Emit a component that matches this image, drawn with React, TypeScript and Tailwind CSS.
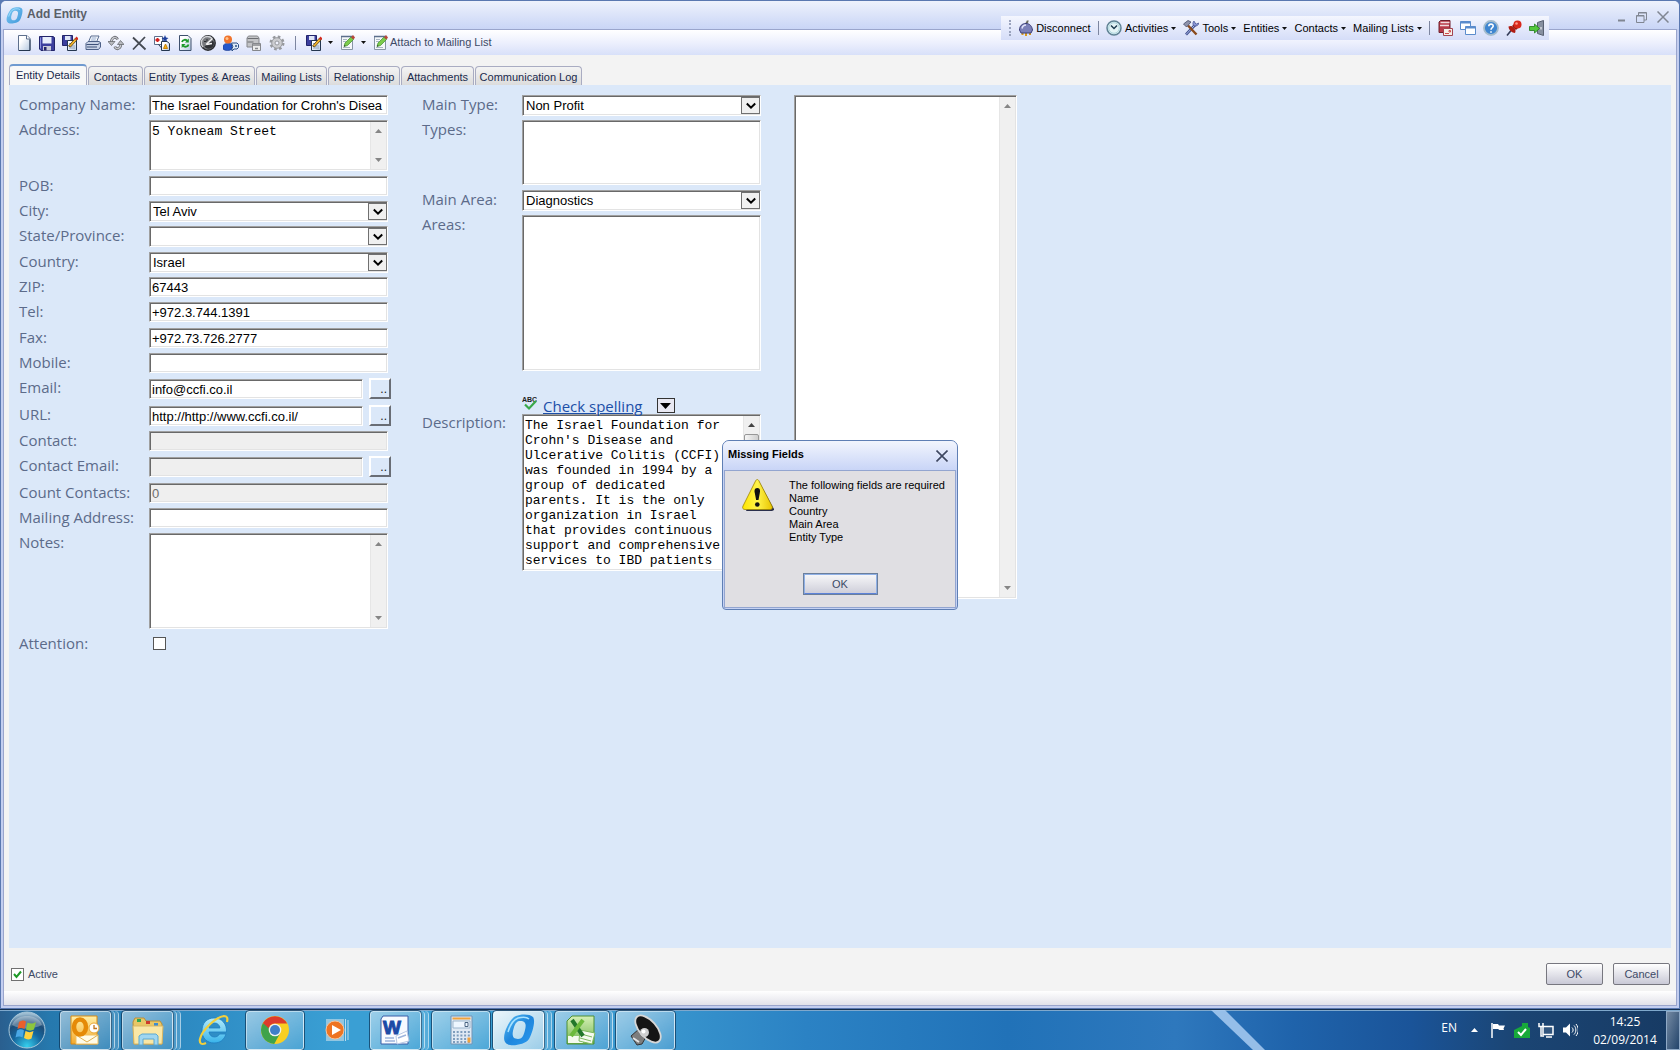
import type { ReactNode } from "react";
import { clsx } from "clsx";

const bevel =
  "border border-t-[#a0a0a0] border-l-[#a0a0a0] border-b-white border-r-white shadow-[inset_1px_1px_#696969,inset_-1px_-1px_#e3e3e3]";

/* ---------- icons ---------- */

function Svg({ children, className = "size-4", box = "0 0 16 16" }: { children: ReactNode; className?: string; box?: string }) {
  return (
    <svg viewBox={box} className={clsx("shrink-0", className)} fill="none" aria-hidden="true">
      {children}
    </svg>
  );
}

const Gradients = () => (
  <svg className="absolute size-0" aria-hidden="true">
    <defs>
      <linearGradient id="page" x1="0" y1="0" x2="1" y2="1">
        <stop offset="0.3" stopColor="#fff" />
        <stop offset="1" stopColor="#b4c8e0" />
      </linearGradient>
      <linearGradient id="logo" x1="0" y1="0" x2="1" y2="1">
        <stop offset="0" stopColor="#5cc0f4" />
        <stop offset="0.5" stopColor="#1f86dc" />
        <stop offset="1" stopColor="#2a9af0" />
      </linearGradient>
      <linearGradient id="logoSoft" x1="0" y1="0" x2="1" y2="1">
        <stop offset="0" stopColor="#7cc8f2" />
        <stop offset="1" stopColor="#3f97da" />
      </linearGradient>
      <linearGradient id="warn" x1="0" y1="0" x2="1" y2="0">
        <stop offset="0" stopColor="#ffe600" />
        <stop offset="0.5" stopColor="#fff34a" />
        <stop offset="1" stopColor="#e8c400" />
      </linearGradient>
      <radialGradient id="orb" cx="0.5" cy="0.95" r="0.9">
        <stop offset="0" stopColor="#35d0ee" />
        <stop offset="0.45" stopColor="#1668a0" />
        <stop offset="0.75" stopColor="#1d4c77" />
        <stop offset="1" stopColor="#9dbdd2" />
      </radialGradient>
      <linearGradient id="outlook" x1="0" y1="0" x2="0" y2="1">
        <stop offset="0" stopColor="#fff0a8" />
        <stop offset="1" stopColor="#f5a92c" />
      </linearGradient>
      <linearGradient id="ie" x1="0" y1="0" x2="0" y2="1">
        <stop offset="0" stopColor="#b5ecfb" />
        <stop offset="1" stopColor="#37b3ea" />
      </linearGradient>
      <linearGradient id="excel" x1="0" y1="0" x2="0" y2="1">
        <stop offset="0" stopColor="#d6f0b6" />
        <stop offset="1" stopColor="#6fb54e" />
      </linearGradient>
    </defs>
  </svg>
);

const PageIcon = () => (
  <Svg>
    <path d="M2.5 .5H11l3 3v12H2.5z" fill="url(#page)" stroke="#5d6f8c" />
    <path d="M14 4.5V15.5H3" stroke="#24364f" />
    <path d="M10.5 .5v3.500h3.500" stroke="#5d6f8c" fill="#fff" />
  </Svg>
);

const SaveIcon = () => (
  <Svg>
    <path d="M.5 1.500H14l1.500 1v13H2L.5 14z" fill="#3c3f9e" stroke="#22246a" />
    <path d="M3.500 2h9v6.500h-9z" fill="#e8eefc" />
    <path d="M1.500 2.500v11" stroke="#8a90e0" />
    <path d="M4 11h8v4.500H4z" fill="#c9cbd8" />
    <path d="M5 12h2.500v3.500H5z" fill="#25266a" />
  </Svg>
);

const SaveEditIcon = () => (
  <Svg>
    <path d="M.5 .5h10v10H.5z" fill="#3c3f9e" stroke="#22246a" />
    <path d="M3 1h5.500v4H3z" fill="#dfe6f8" />
    <path d="M5.500 5.500h9v10h-9z" fill="url(#page)" stroke="#24364f" />
    <path d="M7 8.500h4M7 11h6M7 13h6" stroke="#8fa3bd" />
    <path d="M6.500 11 13 3.500l2 1.500-6.500 7z" fill="#f2b42b" stroke="#3b2a06" strokeWidth=".7" />
    <path d="m12.500 4 2-2.500L16 3v2z" fill="#d52b1e" />
  </Svg>
);

const PrintIcon = () => (
  <Svg>
    <path d="M6 1h8l-2.500 6h-8z" fill="#fff" stroke="#566b8f" />
    <path d="M6.500 3h5M5.800 5h5" stroke="#8ba4cc" />
    <path d="M1 8.500 3 6.500h11l1.500 1v4.500l-2 2.500H1z" fill="#c8d2e6" stroke="#4d6087" />
    <path d="M1.500 9.500h12M2 12h10" stroke="#3d5078" />
    <path d="M13 9.500 15 7.500" stroke="#4d6087" />
  </Svg>
);

const LoopIcon = () => (
  <Svg>
    <path d="M3.500 7.500C3 3 8 0 9.500 4.500" stroke="#6a6c71" strokeWidth="2.800" />
    <path d="M3.500 7.500C3 3 8 0 9.500 4.500" stroke="#c9cbd0" strokeWidth="1.200" />
    <path d="M0 6.500h7l-3.500 4z" fill="#b9bbc0" stroke="#6a6c71" strokeWidth=".8" />
    <path d="M12.800 8.500c.5 4.500-4.500 7.500-6 3" stroke="#6a6c71" strokeWidth="2.800" />
    <path d="M12.800 8.500c.5 4.500-4.500 7.500-6 3" stroke="#c9cbd0" strokeWidth="1.200" />
    <path d="M9.500 9.500h6.500l-3.500-4z" fill="#b9bbc0" stroke="#6a6c71" strokeWidth=".8" />
  </Svg>
);

const DeleteIcon = () => (
  <Svg>
    <path d="M2 2.500 14.500 14.500M14 2 2 14.500" stroke="#454a52" strokeWidth="1.800" />
  </Svg>
);

const ShapesIcon = () => (
  <Svg>
    <path d="M.5 1.500h8v8h-8z" fill="#fff" stroke="#5d6f8c" />
    <path d="M3.500 3v4M1.500 5h4" stroke="#d32121" strokeWidth="2" />
    <path d="m11 0 1 2.500 2.500.5-2 1.500.5 2.500-2-1.500L9 7l.5-2.500-2-1.500L10 2.500z" fill="#1d3f9c" />
    <path d="M4.500 9.500 8.500 14" stroke="#24364f" />
    <path d="M7.500 6.500H13l2.500 2v7h-8z" fill="url(#page)" stroke="#24364f" />
    <path d="m11.500 9 2 4.500h-4z" fill="#f7b314" stroke="#c7820a" />
  </Svg>
);

const RefreshIcon = () => (
  <Svg>
    <path d="M2.500 .5H11l3 3v12H2.500z" fill="url(#page)" stroke="#3e506d" />
    <path d="M5 7c.5-2.500 4-3 5.500-1" stroke="#1c9a2a" strokeWidth="1.800" />
    <path d="M11.800 3.500v4H8z" fill="#1c9a2a" />
    <path d="M11.500 9.500c-.5 2.500-4 3-5.500 1" stroke="#1c9a2a" strokeWidth="1.800" />
    <path d="M4.700 13V9h3.800z" fill="#1c9a2a" />
  </Svg>
);

const GaugeIcon = () => (
  <Svg>
    <circle cx="8" cy="8" r="7.200" fill="#77797d" stroke="#2a2c30" strokeWidth="1.500" />
    <path d="M3 12A6 6 0 0 1 12 3.500" stroke="#d0d2d5" strokeWidth="1.500" />
    <path d="M4.500 11.500a5 5 0 0 0 8.500-6z" fill="#303236" />
    <path d="M6 9.500 12.500 3.500M6.500 9.500 12 8.500" stroke="#f2f2f2" strokeWidth="1.400" />
    <path d="M4 6.500h2.500M7 4v2" stroke="#2a2c30" />
  </Svg>
);

const UserKeyIcon = () => (
  <Svg>
    <path d="M0 10.500C1.500 8 8 7 9 10v4c-2 2-7 2-9 0z" fill="#2456c9" stroke="#143488" strokeWidth=".6" />
    <circle cx="5" cy="4.500" r="4" fill="#f0732a" />
    <circle cx="4" cy="3.500" r="1.500" fill="#ffc08a" />
    <path d="M8.500 8h5.500l1.500 1.500v3L14 14H11l-2 2v-3l1-1z" fill="#dceaf8" stroke="#2b4f86" />
    <circle cx="13" cy="11" r="1" fill="#2b4f86" />
  </Svg>
);

const ServerIcon = () => (
  <Svg>
    <path d="M2.500 1h9l1.500 2v9H1V3z" fill="#c3c4c7" stroke="#85878b" />
    <path d="M1.500 3.500h11M1.500 7h6" stroke="#6c6e72" />
    <path d="M6.500 8.500h8v7h-8z" fill="#ececec" stroke="#85878b" />
    <path d="M7 10h8M9 13.500h3" stroke="#85878b" strokeWidth="1.500" />
  </Svg>
);

const GearIcon = () => (
  <Svg>
    <circle cx="8" cy="8" r="6.300" stroke="#97999d" strokeWidth="2.400" strokeDasharray="2.600 2.350" />
    <circle cx="8" cy="8" r="5.300" fill="#cccdd0" stroke="#97999d" />
    <circle cx="8" cy="8" r="2" fill="#f1f3fd" stroke="#97999d" />
  </Svg>
);

const NoteEditIcon = () => (
  <Svg>
    <path d="M2.500 1.500h11v13h-11z" fill="#f5f8fa" stroke="#8795a5" />
    <path d="M2 1.500h12" stroke="#5d6f8c" strokeWidth="1.500" />
    <path d="M4 12.500h7M4 4.500h4M4 6.500h3" stroke="#a9b6c4" />
    <path d="m5 11.500 1-3.500 6-6 2.500 2.500-6 6z" fill="#7ccb4c" stroke="#3d8d2e" strokeWidth=".7" />
    <path d="m12 2.500 2-2.500L16 2.500l-1.500 2z" fill="#b8493a" />
    <path d="m5 11.500.5-1.500 1 1z" fill="#222" />
  </Svg>
);

const LogoIcon = ({ className, soft }: { className?: string; soft?: boolean }) => (
  <Svg className={className} box="0 0 32 32">
    <path
      fillRule="evenodd"
      d="M13 2C17 0 27-.5 30 3c3 4-1 17-4 22-3 5-14 7-19 6-6-1-7-6-5-13C4 12 8 4 13 2zm3 5c-4 1-5 6-6 10-1 5 0 8 5 8 5 0 6-5 7-9s2-10-6-9z"
      fill={soft ? "url(#logoSoft)" : "url(#logo)"}
    />
    <path d="M5 18C7 11 10 6 15 4c4-1 9-1 11 1" stroke="#a9e2ff" strokeWidth="1.500" />
  </Svg>
);

const PlugIcon = () => (
  <Svg>
    <path d="M8 5c0-3 2-2 1.500-4.500" stroke="#6a6a5c" strokeWidth="2" />
    <path d="M4.500 12v3M12 12v3M8 13v3" stroke="#d99a1a" strokeWidth="2" />
    <path d="M1.500 10c0-4 2.500-6.500 6.500-6.500s6 3 6.500 6.500l-1.500 3H3z" fill="#7b80b8" stroke="#3b3e78" />
    <path d="M4 8.500c.5-2.500 2-3.500 4-3.500" stroke="#dfe1f8" strokeWidth="1.500" />
  </Svg>
);

const ClockIcon = () => (
  <Svg>
    <circle cx="8" cy="8" r="7" fill="#e4f4f6" stroke="#5f8294" strokeWidth="1.500" />
    <circle cx="8" cy="8" r="5.300" stroke="#a9d4dc" />
    <path d="M5 5.500 8 8.500l3-3" stroke="#1e3c50" strokeWidth="1.500" />
  </Svg>
);

const ToolsIcon = () => (
  <Svg>
    <path d="M3 14.500 13 4" stroke="#3d4c8c" strokeWidth="2.600" />
    <path d="M3 14.500 12 5" stroke="#b4c2ee" strokeWidth="1" />
    <path d="M11 1c-2 2-1 5 1 5s4-1 3.500-3L13.500 4 12 3z" fill="#8a98d8" stroke="#3d4c8c" strokeWidth=".7" />
    <path d="M13.500 14.500 5 5.500" stroke="#8a4a1c" strokeWidth="2.400" />
    <path d="M.5 4 5 .5l3 1.500-4.500 5z" fill="#8e93ac" stroke="#454a68" strokeWidth=".8" />
  </Svg>
);

const BookMailIcon = () => (
  <Svg>
    <path d="M2 2 3.500.5H13v12H2z" fill="#b83a48" stroke="#70202c" />
    <path d="M3.500 2.500h9M3 5.500h9" stroke="#efd9dc" strokeWidth="1.400" />
    <path d="M6.500 8.500h9v7h-9z" fill="#f6efe8" stroke="#a34450" />
    <path d="M8 13.500h4M12 10.500h1.500v1.500H12z" stroke="#d04a4a" />
  </Svg>
);

const WindowsIcon = () => (
  <Svg>
    <path d="M.5 1.500h10v8H.5z" fill="#fff" stroke="#5b8ccc" />
    <path d="M.5 2.500h10" stroke="#5b8ccc" strokeWidth="2" />
    <path d="M5.500 6.500h10v8h-10z" fill="#fff" stroke="#5b8ccc" />
    <path d="M5.500 7.500h10" stroke="#5b8ccc" strokeWidth="2" />
  </Svg>
);

const HelpIcon = () => (
  <Svg>
    <circle cx="8" cy="8" r="7" fill="#3f86d0" stroke="#a4bccd" strokeWidth="1.800" />
    <path d="M5.800 6.300c0-3 4.600-2.800 4.400-.2C10 7.800 8 7.800 8 9.800M8 11.200v1.500" stroke="#fff" strokeWidth="1.600" />
  </Svg>
);

const PinIcon = () => (
  <Svg>
    <path d="M1 15.500 5.500 10" stroke="#333b58" strokeWidth="1.600" />
    <path d="M2.500 6.500c2-1 4-.5 5.500 1s2 3.500 1 5.500C6 13 2.500 10 2.500 6.500z" fill="#b01c12" />
    <path d="m6 6 3-3 4 4-3 3z" fill="#8d140c" />
    <circle cx="11.500" cy="4.500" r="4" fill="#d8281b" />
    <circle cx="10.500" cy="3.500" r="1.300" fill="#ff9a8c" />
  </Svg>
);

const ExitIcon = () => (
  <Svg>
    <path d="M8.500 2.500 14.500 .5v15l-6-2z" fill="#8790a0" stroke="#596172" />
    <path d="M12 7v2.500" stroke="#fff" />
    <path d="M10.500 8.500 5.500 4v2.500H.5v4h5V13z" fill="#52c83c" stroke="#1f7a18" strokeWidth=".8" />
  </Svg>
);

const Caret = () => (
  <Svg className="h-[3px] w-[5px]" box="0 0 5 3">
    <path d="M0 0h5L2.500 3z" fill="#111" />
  </Svg>
);

/* ---------- form controls ---------- */

function Label({ id, children, className = "w-[130px]" }: { id: string; children: ReactNode; className?: string }) {
  return (
    <label
      htmlFor={id}
      className={clsx("shrink-0 whitespace-nowrap font-['Open_Sans',sans-serif] text-[15px] leading-[18px] text-[#5c6b8a]", className)}
    >
      {children}
    </label>
  );
}

function TextBox({ id, value, disabled, className = "w-[239px]" }: { id: string; value?: string; disabled?: boolean; className?: string }) {
  return (
    <input
      id={id}
      type="text"
      defaultValue={value}
      disabled={disabled}
      className={clsx("h-5 px-0.5 text-[13px] text-black disabled:bg-[#efefef] disabled:text-[#6d6d6d] enabled:bg-white", bevel, className)}
    />
  );
}

function DropDown({ id, value = "" }: { id: string; value?: string }) {
  return (
    <div className={clsx("flex h-[21px] w-[239px] items-center bg-white py-px pl-px", bevel)}>
      <select id={id} defaultValue={value} className="h-full min-w-0 flex-1 appearance-none px-0.5 text-[13px] leading-4 text-black outline-none">
        <option>{value}</option>
      </select>
      <span className="pointer-events-none flex h-[17px] w-[19px] items-center justify-center border border-[#707070] bg-[#f0f0f0]">
        <Svg className="h-2 w-2.5" box="0 0 10 8">
          <path d="m.8 1.500 4.200 4.200 4.200-4.200" stroke="#000" strokeWidth="2" />
        </Svg>
      </span>
    </div>
  );
}

function ScrollStrip({ thumb }: { thumb?: boolean }) {
  return (
    <div className="flex w-4 shrink-0 flex-col items-center justify-between border-l border-[#e6e6e6] bg-[#f0f0f0] py-[7px]">
      <Svg className="h-1 w-[7px]" box="0 0 7 4"><path d="M3.500 0 7 4H0z" fill={thumb ? "#444" : "#868686"} /></Svg>
      {thumb && <div className="mt-[7px] h-10 w-[15px] rounded-xs border border-[#979797] bg-linear-to-r from-[#f5f5f5] to-[#cfcfcf]" />}
      <div className="flex-1" />
      <Svg className="h-1 w-[7px]" box="0 0 7 4"><path d="M0 0h7L3.500 4z" fill={thumb ? "#444" : "#868686"} /></Svg>
    </div>
  );
}

function TextArea({ id, value, className, thumb }: { id: string; value?: string; className?: string; thumb?: boolean }) {
  return (
    <div className={clsx("flex w-[239px] bg-white p-px", bevel, className)}>
      <textarea
        id={id}
        defaultValue={value}
        className="min-w-0 flex-1 resize-none overflow-hidden px-px pt-0.5 font-['Liberation_Mono',monospace] text-[13px] leading-[15px] text-black outline-none"
      />
      <ScrollStrip thumb={thumb} />
    </div>
  );
}

const MoreButton = ({ label }: { label: string }) => (
  <button
    aria-label={label}
    className="flex h-[21px] w-[22px] items-end justify-end border-2 border-t-white border-l-white border-r-[#696d75] border-b-[#696d75] pr-0.5 pb-1 text-[12px] leading-[8px] text-[#222]"
  >
    ..
  </button>
);

type Field = { label: string; id: string; h: string; kind?: "text" | "select" | "more"; value?: string; disabled?: boolean };

const fields: Field[] = [
  { label: "POB:", id: "pob", h: "h-[25px]" },
  { label: "City:", id: "city", h: "h-[25px]", kind: "select", value: "Tel Aviv" },
  { label: "State/Province:", id: "state", h: "h-[26px]", kind: "select" },
  { label: "Country:", id: "country", h: "h-[25px]", kind: "select", value: "Israel" },
  { label: "ZIP:", id: "zip", h: "h-[25px]", value: "67443" },
  { label: "Tel:", id: "tel", h: "h-[26px]", value: "+972.3.744.1391" },
  { label: "Fax:", id: "fax", h: "h-[25px]", value: "+972.73.726.2777" },
  { label: "Mobile:", id: "mobile", h: "h-[25px]" },
  { label: "Email:", id: "email", h: "h-[27px]", kind: "more", value: "info@ccfi.co.il" },
  { label: "URL:", id: "url", h: "h-[26px]", kind: "more", value: "http://http://www.ccfi.co.il/" },
  { label: "Contact:", id: "contact", h: "h-[25px]", disabled: true },
  { label: "Contact Email:", id: "contact-email", h: "h-[27px]", kind: "more", disabled: true },
  { label: "Count Contacts:", id: "count", h: "h-[25px]", value: "0", disabled: true },
  { label: "Mailing Address:", id: "mailing", h: "h-[25px]" },
];

function FieldRow({ f }: { f: Field }) {
  return (
    <div className={clsx("flex items-start", f.h)}>
      <Label id={f.id}>{f.label}</Label>
      {f.kind === "select" && <DropDown id={f.id} value={f.value} />}
      {!f.kind && <TextBox id={f.id} value={f.value} disabled={f.disabled} />}
      {f.kind === "more" && (
        <div className="flex items-start gap-1.5">
          <TextBox id={f.id} value={f.value} disabled={f.disabled} className="mt-px w-[214px]" />
          <MoreButton label={`Open ${f.label}`} />
        </div>
      )}
    </div>
  );
}

const description =
  "The Israel Foundation for\nCrohn's Disease and\nUlcerative Colitis (CCFI)\nwas founded in 1994 by a\ngroup of dedicated\nparents. It is the only\norganization in Israel\nthat provides continuous\nsupport and comprehensive\nservices to IBD patients";

function EntityForm() {
  return (
    <div className="flex items-start gap-8">
      <div className="w-[371px] shrink-0">
        <div className="flex h-[25px] items-start">
          <Label id="company">Company Name:</Label>
          <TextBox id="company" value="The Israel Foundation for Crohn's Disea" />
        </div>
        <div className="flex h-14 items-start">
          <Label id="address">Address:</Label>
          <TextArea id="address" value="5 Yokneam Street" className="h-[51px]" />
        </div>
        {fields.map((f) => (
          <FieldRow key={f.id} f={f} />
        ))}
        <div className="flex h-[101px] items-start">
          <Label id="notes">Notes:</Label>
          <TextArea id="notes" className="h-24" />
        </div>
        <div className="flex items-start">
          <Label id="attention">Attention:</Label>
          <input id="attention" type="checkbox" className="mt-[3px] ml-1 size-[13px] appearance-none border border-[#555] bg-white" />
        </div>
      </div>

      <div className="w-[340px] shrink-0">
        <div className="flex h-[25px] items-start">
          <Label id="main-type" className="w-[100px]">Main Type:</Label>
          <DropDown id="main-type" value="Non Profit" />
        </div>
        <div className="flex h-[70px] items-start">
          <Label id="types" className="w-[100px]">Types:</Label>
          <select id="types" multiple className={clsx("h-[65px] w-[239px] bg-white", bevel)} />
        </div>
        <div className="flex h-[25px] items-start">
          <Label id="main-area" className="w-[100px]">Main Area:</Label>
          <DropDown id="main-area" value="Diagnostics" />
        </div>
        <div className="flex h-[182px] items-start">
          <Label id="areas" className="w-[100px]">Areas:</Label>
          <select id="areas" multiple className={clsx("h-[156px] w-[239px] bg-white", bevel)} />
        </div>
        <div className="flex items-start">
          <div className="pt-4">
            <Label id="description" className="block w-[100px]">Description:</Label>
          </div>
          <div className="w-[239px] shrink-0">
            <div className="flex h-[17px] items-center gap-1.5">
              <Svg className="h-[17px] w-[15px]" box="0 0 15 17">
                <text x="0" y="5" fontSize="7" fontFamily="Liberation Sans" fontWeight="bold" fill="#222">ABC</text>
                <path d="m3 7.500 4 4 7-7.500" stroke="#3aa84a" strokeWidth="2.200" />
              </Svg>
              <a href="#spelling" className="font-['Open_Sans',sans-serif] text-[15px] leading-4 text-[#1c4fa8] underline">
                Check spelling
              </a>
              <button aria-label="Spelling options" className="ml-2 flex h-[15px] w-[18px] items-center justify-center border border-[#333] bg-[#e8e8f2]">
                <Svg className="h-1.5 w-[11px]" box="0 0 11 6"><path d="M0 0h11L5.500 6z" fill="#000" /></Svg>
              </button>
            </div>
            <TextArea id="description" value={description} className="h-[157px]" thumb />
          </div>
        </div>
      </div>

      <div className={clsx("flex h-[504px] w-[223px] shrink-0 bg-white p-px", bevel)}>
        <div className="flex-1" />
        <ScrollStrip />
      </div>
    </div>
  );
}

/* ---------- window chrome ---------- */

const toolButtons = [
  { name: "New", icon: <PageIcon /> },
  { name: "Save", icon: <SaveIcon /> },
  { name: "Save and edit", icon: <SaveEditIcon /> },
  { name: "Print", icon: <PrintIcon /> },
  { name: "Replay", icon: <LoopIcon /> },
  { name: "Delete", icon: <DeleteIcon /> },
  { name: "Workflow", icon: <ShapesIcon /> },
  { name: "Refresh", icon: <RefreshIcon /> },
  { name: "History", icon: <GaugeIcon /> },
  { name: "Permissions", icon: <UserKeyIcon /> },
  { name: "Archive", icon: <ServerIcon /> },
  { name: "Settings", icon: <GearIcon /> },
];

function Toolbar() {
  return (
    <div className="flex h-[25px] items-center bg-linear-to-b from-white via-[#edf0fd] to-[#d8e0f9] pl-3 text-[11px] text-[#3d4a66]">
      <div className="flex gap-[7px]">
        {toolButtons.map((b) => (
          <button key={b.name} aria-label={b.name}>{b.icon}</button>
        ))}
      </div>
      <div className="mx-2.5 h-3.5 w-px bg-[#7d86a0]" />
      <button aria-label="Save as" className="flex items-center gap-1.5"><SaveEditIcon /><Caret /></button>
      <button aria-label="Notes" className="ml-1.5 flex items-center gap-1.5"><NoteEditIcon /><Caret /></button>
      <button className="ml-1.5 flex items-center gap-0.5"><NoteEditIcon />Attach to Mailing List</button>
    </div>
  );
}

const menus = [
  { name: "Activities", icon: <ClockIcon /> },
  { name: "Tools", icon: <ToolsIcon /> },
  { name: "Entities" },
  { name: "Contacts" },
  { name: "Mailing Lists" },
];

function MenuBar() {
  return (
    <div className="absolute top-4 right-[131px] flex h-6 w-[548px] items-center justify-between bg-linear-to-b from-[#f4f6fe] to-[#d5ddf8] pr-1 pl-2 text-[11px] text-black">
      <div className="h-4 border-l-2 border-dotted border-[#9aa3bd]" />
      <button className="flex items-center gap-0.5"><PlugIcon />Disconnect</button>
      <div className="h-3.5 w-px bg-[#7d86a0]" />
      {menus.map((m) => (
        <button key={m.name} className="flex items-center gap-[3px]">
          {m.icon}
          {m.name}
          <Caret />
        </button>
      ))}
      <div className="h-3.5 w-px bg-[#7d86a0]" />
      <div className="flex gap-[7px]">
        <button aria-label="Address book"><BookMailIcon /></button>
        <button aria-label="Windows"><WindowsIcon /></button>
        <button aria-label="Help"><HelpIcon /></button>
        <button aria-label="Pin"><PinIcon /></button>
        <button aria-label="Exit"><ExitIcon /></button>
      </div>
    </div>
  );
}

const tabs = [
  { name: "Contacts", w: "w-[55px]" },
  { name: "Entity Types & Areas", w: "w-[111px]" },
  { name: "Mailing Lists", w: "w-[71px]" },
  { name: "Relationship", w: "w-[72px]" },
  { name: "Attachments", w: "w-[73px]" },
  { name: "Communication Log", w: "w-[107px]" },
];

function Tabs() {
  return (
    <div className="flex h-[30px] items-end gap-px text-[11px] text-[#1a2a4c]" role="tablist">
      <button role="tab" aria-selected="true" className="h-[21px] w-[78px] rounded-t-sm border border-t-2 border-b-0 border-[#a9acc2] border-t-[#6f9ad0] bg-[#f8f8f8] pb-0.5 leading-4">
        Entity Details
      </button>
      {tabs.map((t) => (
        <button key={t.name} role="tab" aria-selected="false" className={clsx("h-[19px] rounded-t-sm border border-b-0 border-[#a9acc2] bg-linear-to-b from-[#f4f4f4] to-[#dcdcdc] pt-px leading-4 whitespace-nowrap", t.w)}>
          {t.name}
        </button>
      ))}
    </div>
  );
}

function Dialog() {
  return (
    <div className="pointer-events-none fixed inset-0 grid place-items-center">
      <div role="dialog" aria-label="Missing Fields" className="pointer-events-auto flex h-[170px] w-[236px] flex-col overflow-hidden rounded-t-[7px] rounded-b-sm border border-[#5f7fb4] bg-[#c5d2f4]">
        <div className="flex h-[29px] shrink-0 items-center justify-between bg-linear-to-b from-[#f2f5fd] to-[#c9d5f7] pr-[9px] pl-[5px]">
          <span className="pb-0.5 text-[11px] font-bold text-black">Missing Fields</span>
          <button aria-label="Close">
            <Svg className="size-3" box="0 0 12 12"><path d="m.5 .5 11 11M11.500.5l-11 11" stroke="#3e4760" strokeWidth="1.600" /></Svg>
          </button>
        </div>
        <div className="mx-px mb-px flex flex-1 flex-col border border-[#93a5d0] bg-[#e0dfe3] px-[17px] pt-2">
          <div className="flex gap-[15px]">
            <Svg className="size-8" box="0 0 32 32">
              <path d="M17 2.500 32 30c.500 1-1 2-2 2H4z" fill="#2a2f4c" />
              <path d="M13.500 2c1-2 2.500-2 3.500 0l13 25c1 2 0 3.500-2 3.500H3c-2 0-3-1.500-2-3.500z" fill="url(#warn)" stroke="#a08600" strokeWidth=".8" />
              <path d="M15.300 9c3 0 3 3 2.500 5l-1.300 7h-2.400L12.800 14c-.5-2-.5-5 2.500-5z" fill="#111" />
              <circle cx="15.300" cy="25.500" r="2.300" fill="#111" />
            </Svg>
            <p className="text-[11px] leading-[13px] whitespace-nowrap text-black">
              The following fields are required
              <br />Name
              <br />Country
              <br />Main Area
              <br />Entity Type
            </p>
          </div>
          <button className="mt-auto mb-3 h-[22px] w-[75px] self-center border-2 border-[#8fb0e6] border-b-[#5c82d8] bg-linear-to-b from-[#f6f6f8] to-[#cfcfda] text-[11px] leading-4 text-[#3d4a66] outline outline-1 -outline-offset-1 outline-[#6b7f9c]">
            OK
          </button>
        </div>
      </div>
    </div>
  );
}

const FootButton = ({ children }: { children: ReactNode }) => (
  <button className="h-[22px] w-[57px] rounded-xs border border-[#77777f] bg-linear-to-b from-white to-[#c9c9d6] text-[11px] leading-4 text-[#3d4a66]">
    {children}
  </button>
);

/* ---------- taskbar ---------- */

function TaskButton({ name, children, edges = 0, active, w = "w-[51px]" }: { name: string; children: ReactNode; edges?: number; active?: boolean; w?: string }) {
  return (
    <div className="flex h-[39px]">
      <button
        aria-label={name}
        className={clsx(
          "flex items-center justify-center rounded-[3px] border border-white/60 outline outline-1 outline-[#0d3356]/70",
          active ? "bg-linear-to-br from-white/90 to-white/50" : "bg-linear-to-br from-white/50 to-white/10",
          w,
        )}
      >
        {children}
      </button>
      {edges > 0 && <div className="w-1 rounded-r-sm border-r border-white/60 bg-white/15" />}
      {edges > 1 && <div className="w-1 rounded-r-sm border-r border-white/50 bg-white/15" />}
    </div>
  );
}

function Taskbar() {
  return (
    <footer className="flex h-[41px] shrink-0 items-center border-t border-[#16304f] bg-linear-[90deg,#2a5f8f_0%,#2679ae_3%,#2e8cc4_12%,#3a9fd4_20%,#3a9fd4_28%,#3a98cf_38%,#2b82c4_48%,#2172b8_60%,#2e78bd_70%,#1f63ab_77%,#1a5499_84%,#1b4574_90%,#173a63_100%] text-white shadow-[inset_0_1px_#7fa8cc]">
      <button aria-label="Start" className="ml-2 w-[52px]">
        <Svg className="size-[38px]" box="0 0 38 38">
          <circle cx="19" cy="19" r="18" fill="url(#orb)" stroke="#a9c8da" />
          <path d="M4 14C8 2 30 2 34 14c-8 4-22 5-30 0z" fill="#fff" opacity=".3" />
          <path d="M11 11c3-2 5-2 7-.5L16.500 18c-2-1.500-4.500-1.500-7 0z" fill="#e9602c" />
          <path d="M19.500 11.500c3 1.500 5 1.500 8.500-.5l-2 7.500c-3 1.500-5 1.500-8 0z" fill="#8cc63e" />
          <path d="M9 19.500c3-2 5-1.500 7 0l-1.500 7c-2-1.500-4.500-1.500-7 0z" fill="#4aa8e6" />
          <path d="M17.500 20c3 1.500 5 1.500 8 0l-2 7.500c-3 1.500-5 1-7.500-.5z" fill="#ffd23f" />
        </Svg>
      </button>
      <div className="flex flex-1 items-center gap-[3px]">
        <TaskButton name="Outlook" edges={2}>
          <Svg className="mr-1 size-8" box="0 0 32 32">
            <path d="M3 2h26v28H3z" fill="url(#outlook)" stroke="#d88a12" />
            <path d="M8 21h22v9H8z" fill="#fffbe8" stroke="#f0c060" />
            <path d="m8 21 11 7 11-7" stroke="#e0b050" />
            <ellipse cx="12" cy="13" rx="6" ry="7.500" stroke="#e58a08" strokeWidth="4.500" />
            <circle cx="26" cy="14" r="5" fill="#fff" stroke="#e8a838" />
            <path d="M26 11v3.500h3" stroke="#c0741c" strokeWidth="1.300" />
          </Svg>
        </TaskButton>
        <TaskButton name="Explorer" edges={2}>
          <Svg className="size-8" box="0 0 32 32">
            <path d="M1 8 3 4h9l2 3h14l2 3v20H2z" fill="#e9c766" stroke="#b98f38" />
            <path d="M5 5h4v3H5z" fill="#2fa84f" />
            <path d="M14 7h4v3h-4z" fill="#cc3b2b" />
            <path d="M22 9h4v3h-4z" fill="#3b8bd0" />
            <path d="M1 12h30l-1 18H2z" fill="#f9e7a6" stroke="#d9b764" />
            <path d="M7 31V22l3-2h14l2 2v9h-4v-6H11v6z" fill="#9fd6f0" stroke="#5ba8d2" />
          </Svg>
        </TaskButton>
        <button aria-label="Internet Explorer" className="flex w-[59px] justify-center">
          <Svg className="size-8" box="0 0 32 32">
            <path fillRule="evenodd" d="M16 4c8 0 13 6 12.500 14H11c.5 3 2.500 5 5.500 5 2 0 4-1 5-3h6.500c-2 6-6 9-12 9C9 29 4 24 4 17 4 9 9 4 16 4zm-5 10h11c-.5-3-2.500-5-5.500-5s-5 2-5.500 5z" fill="url(#ie)" stroke="#1f7fc0" strokeWidth=".8" />
            <path d="M29 8c1-4 0-6-3-6C18 3 4 16 2 25c-1 5 2 6 6 4" stroke="#f1cf3d" strokeWidth="2.200" />
          </Svg>
        </button>
        <TaskButton name="Chrome" w="w-[58px]">
          <Svg className="size-7" box="0 0 28 28">
            <circle cx="14" cy="14" r="14" fill="#f9cf23" />
            <path d="M1.900 7a14 14 0 0 0 11.300 21L19 17.500 14 14z" fill="#3fa34b" />
            <path d="M1.900 7A14 14 0 0 1 26.100 7.500H14a6.500 6.500 0 0 0-6.200 4.700z" fill="#dc3b2c" />
            <circle cx="14" cy="14" r="6.300" fill="#f2f2f2" />
            <circle cx="14" cy="14" r="5" fill="#3f7fc8" />
          </Svg>
        </TaskButton>
        <button aria-label="Media Player" className="flex w-[60px] justify-center">
          <Svg className="size-6" box="0 0 24 24">
            <path d="M1 1h18v22H1z" fill="#a9cfe4" opacity=".8" />
            <path d="M20.500 1v22M23 2v20" stroke="#bcdcec" />
            <circle cx="10" cy="12" r="9" fill="#ee7422" stroke="#f8c49a" />
            <path d="m7 7 9 5-9 5z" fill="#fff" />
          </Svg>
        </button>
        <TaskButton name="Word" edges={2}>
          <Svg className="mr-1 size-8" box="0 0 32 32">
            <path d="M5 2h25v28H3V5z" fill="#f7faff" stroke="#3b5ea8" />
            <path d="m18 22 11-5 2 10-12 3z" fill="#fff" stroke="#b8c8e4" />
            <path d="M7 24h9M7 27h10M20 24l8-3" stroke="#9db4dc" strokeWidth="1.500" />
            <text x="5" y="20" fontSize="19" fontWeight="bold" fontFamily="Liberation Sans" fill="#1c4aa6" stroke="#1c4aa6">W</text>
          </Svg>
        </TaskButton>
        <TaskButton name="Calculator" w="w-[58px]">
          <Svg className="h-[30px] w-[23px]" box="0 0 23 30">
            <path d="M1 1h21v28H1z" fill="#dfe9f4" stroke="#7393b4" />
            <path d="M2.500 2.500h18v2h-18z" fill="#f0a23c" />
            <path d="M3 6h17v7H3z" fill="#eef6ff" stroke="#9db5cc" />
            <path d="M15 7.500h3v4h-3z" stroke="#4a6582" />
            <path d="M3 17h17M3 20.500h17M3 24h17M3 27h17" stroke="#7e9dbd" strokeWidth="2" strokeDasharray="2 1.700" />
            <path d="M17.500 22.500h3v5h-3z" fill="#f0a23c" />
          </Svg>
        </TaskButton>
        <TaskButton name="Entity Manager" edges={2} active>
          <LogoIcon className="size-8" />
        </TaskButton>
        <TaskButton name="Excel" edges={1} w="w-[54px]">
          <Svg className="mr-1 size-8" box="0 0 32 32">
            <path d="M8 2h22v28H3V7z" fill="url(#excel)" stroke="#4d8f34" />
            <path d="M4 22h15v7H4z" fill="#f4faee" />
            <path d="m16 16 15 3-3 11-13-3z" fill="#f4faee" stroke="#7db860" />
            <path d="m17 20 11 3M16 24l11 3" stroke="#7db860" />
            <path d="m8 6 11 16" stroke="#21772a" strokeWidth="4" />
            <path d="M19 6 7 22" stroke="#6cba3c" strokeWidth="4" />
          </Svg>
        </TaskButton>
        <TaskButton name="Sound" w="w-[59px]">
          <Svg className="size-8" box="0 0 32 32">
            <path d="m1 22 8-7 8 6-5 9-5 1z" fill="#7d7d7d" stroke="#333" />
            <path d="m3 24 6 4" stroke="#e4e4e4" strokeWidth="2" />
            <ellipse cx="18" cy="15" rx="8.500" ry="16.500" transform="rotate(-42 18 15)" fill="#151515" stroke="#d6d6d6" strokeWidth="1.800" />
            <circle cx="14.500" cy="18.500" r="4.500" fill="#cfcfcf" />
            <circle cx="13.500" cy="17.500" r="2" fill="#fff" />
          </Svg>
        </TaskButton>
        <Svg className="mr-[174px] ml-auto h-10 w-14" box="0 0 56 40">
          <path d="M0 0h14l40 40H42z" fill="#a9cdf2" opacity=".85" />
        </Svg>
      </div>
      <div className="flex items-center gap-2 font-['Open_Sans',sans-serif] text-[12px]">
        <span className="mr-1.5 pb-1">EN</span>
        <Svg className="mr-1 h-1 w-[7px]" box="0 0 7 4"><path d="M3.500 0 7 4H0z" fill="#fff" /></Svg>
        <Svg><path d="M2 1v15" stroke="#fff" strokeWidth="1.500" /><path d="M3 2h5l1 1.500h6l-1.500 3 .5 1.500H9.500L8 7H3z" fill="#fff" /></Svg>
        <Svg><path d="M0 8 8 4V1h6v4l2 1v10H0z" fill="#17a93a" /><path d="m4 10 3 3 5-6" stroke="#fff" strokeWidth="2" /></Svg>
        <Svg><path d="M5 4.500h10v8H5z" stroke="#fff" strokeWidth="1.500" fill="#31557e" /><path d="M1 1v3.500h4V1M3 5v9h3M8 15h6" stroke="#fff" strokeWidth="1.500" /></Svg>
        <Svg><path d="M1 5.500h3l4-4v13l-4-4H1z" fill="#fff" /><path d="M10 5.500c1.500 1.500 1.500 3.500 0 5M12 3.500c2.500 2.500 2.500 6.500 0 9M14 2c3 4 3 8 0 12" stroke="#fff" /></Svg>
        <div className="ml-1.5 w-[66px] pt-0.5 text-center leading-[18px] whitespace-nowrap">
          <div>14:25</div>
          <div>02/09/2014</div>
        </div>
        <button aria-label="Show desktop" className="h-[39px] w-3.5 border border-[#8fa9c6] bg-linear-to-br from-white/40 to-white/5" />
      </div>
    </footer>
  );
}

export default function App() {
  return (
    <div className="relative flex min-h-screen flex-col bg-[#5a7ab4] font-['Liberation_Sans',Arial,sans-serif]">
      <Gradients />
      <main className="flex flex-1 flex-col overflow-hidden rounded-t-[6px] border border-[#5a78b0] bg-[#c3cef0]">
        <header className="flex h-[28px] items-center justify-between bg-linear-to-b from-[#eef2fc] to-[#c9d5f6] pr-2.5 pl-[5px]">
          <div className="flex items-center gap-1 text-[12px] font-bold text-[#5a5f68]">
            <LogoIcon className="size-[17px]" soft />
            <span className="pb-0.5">Add Entity</span>
          </div>
          <div className="flex items-end gap-2.5 pt-1 text-[#808692]">
            <button aria-label="Minimize"><Svg className="h-2.5 w-[9px]" box="0 0 9 10"><path d="M1 7.500h7" stroke="currentColor" strokeWidth="2" /></Svg></button>
            <button aria-label="Restore"><Svg className="size-[11px]" box="0 0 11 11"><path d="M2.500 3V.5h8V8H8M.5 3.500h7.500v7H.5z" stroke="currentColor" /><path d="M2.500 1h8M.5 4h7.500" stroke="currentColor" /></Svg></button>
            <button aria-label="Close window"><Svg className="size-3" box="0 0 12 12"><path d="m.5 .5 11 11M11.500.5l-11 11" stroke="currentColor" strokeWidth="1.500" /></Svg></button>
          </div>
        </header>
        <div className="mx-0.5 mb-0.5 flex flex-1 flex-col border border-[#9aa5cc] bg-[#f3f3f3]">
          <Toolbar />
          <div className="flex flex-1 flex-col px-[5px]">
            <Tabs />
            <section className="flex-1 bg-[#dbe8f9] px-2.5 py-2.5">
              <EntityForm />
            </section>
            <div className="flex h-[43px] shrink-0 items-center justify-between pt-2 pr-px">
              <div className="ml-0.5 flex items-center gap-1 pt-0.5 text-[11px] text-[#3d4a66]">
                <span className="relative flex">
                  <input id="active" type="checkbox" defaultChecked className="size-[13px] appearance-none border border-[#707070] bg-white" />
                  <Svg className="pointer-events-none absolute inset-0 size-[13px]" box="0 0 13 13"><path d="m3 6 2.500 3L10 3.500" stroke="#1f9a28" strokeWidth="2" /></Svg>
                </span>
                <label htmlFor="active">Active</label>
              </div>
              <div className="flex gap-2.5">
                <FootButton>OK</FootButton>
                <FootButton>Cancel</FootButton>
              </div>
            </div>
          </div>
          <div className="h-3.5 shrink-0 bg-linear-to-b from-white to-[#e2e2ea]" />
        </div>
      </main>
      <MenuBar />
      <Dialog />
      <Taskbar />
    </div>
  );
}
